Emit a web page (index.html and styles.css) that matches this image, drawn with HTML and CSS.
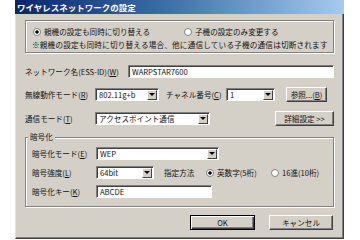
FILE: index.html
```html
<!DOCTYPE html>
<html lang="ja">
<head>
<meta charset="utf-8">
<title>ワイヤレスネットワークの設定</title>
<link rel="stylesheet" href="styles.css">
</head>
<body>
<div class="win">
  <div class="title">ワイヤレスネットワークの設定</div>
  <div class="body">
    <div class="grp top">
      <div class="radios">
        <span class="radio r1"><span class="rb on"></span>親機の設定も同時に切り替える</span>
        <span class="radio"><span class="rb"></span>子機の設定のみ変更する</span>
      </div>
      <div class="note">※親機の設定も同時に切り替える場合、他に通信している子機の通信は切断されます</div>
    </div>

    <div class="row r-net">
      <span class="lbl w-net">ネットワーク名(ESS-ID)(<u>W</u>)</span>
      <span class="field grow">WARPSTAR7600</span>
    </div>

    <div class="row r-mode">
      <span class="lbl w-70">無線動作モード(<u>R</u>)</span>
      <span class="field sel w-mode">802.11g+b<span class="arrow"></span></span>
      <span class="lbl ch">チャネル番号(<u>C</u>)</span>
      <span class="field sel w-ch">1<span class="arrow"></span></span>
      <span class="btn b-ref">参照...(<u>B</u>)</span>
    </div>

    <div class="row r-comm">
      <span class="lbl w-70">通信モード(<u>T</u>)</span>
      <span class="field sel w-comm">アクセスポイント通信<span class="arrow"></span></span>
      <span class="btn b-adv">詳細設定 &gt;&gt;</span>
    </div>

    <div class="grp enc">
      <span class="legend">暗号化</span>
      <div class="row r-in">
        <span class="lbl w-64">暗号化モード(<u>E</u>)</span>
        <span class="field sel w-encm">WEP<span class="arrow"></span></span>
      </div>
      <div class="row r-in">
        <span class="lbl w-64">暗号強度(<u>L</u>)</span>
        <span class="field sel w-str">64bit<span class="arrow"></span></span>
        <span class="lbl how">指定方法</span>
        <span class="radio r2"><span class="rb on"></span>英数字(5桁)</span>
        <span class="radio"><span class="rb"></span>16進(10桁)</span>
      </div>
      <div class="row r-in">
        <span class="lbl w-64">暗号化キー(<u>K</u>)</span>
        <span class="field w-key">ABCDE</span>
      </div>
    </div>

    <div class="actions">
      <span class="btn def b-ok">OK</span>
      <span class="btn b-cancel">キャンセル</span>
    </div>
  </div>
</div>
</body>
</html>
```
FILE: styles.css
```css
* { box-sizing: border-box; margin: 0; padding: 0; }
html, body { width: 360px; height: 240px; overflow: hidden; background: #fff; }
body {
  font-family: "Noto Sans CJK JP", "Noto Sans", sans-serif;
  font-size: 7.6px;
  line-height: 10px;
  color: #111;
}
u { text-decoration: underline; }

.win {
  margin-left: 15px;
  width: 329px;
  height: 239px;
  display: flex;
  flex-direction: column;
}
.title {
  height: 14px;
  flex: none;
  background: linear-gradient(to right, #0a246a 0%, #3a6ea5 45%, #a6caf0 100%);
  color: #fff;
  font-weight: bold;
  font-size: 8.5px;
  line-height: 14px;
  padding-left: 2px;
  white-space: nowrap;
}
.body {
  flex: 1;
  display: flex;
  flex-direction: column;
  background: #d4d0c8;
  border-left: 1px solid #e4e1db;
  border-right: 1px solid #404040;
  border-bottom: 1px solid #404040;
  box-shadow: inset -1px -1px #808080;
  padding: 6px 9px 0 9px;
}

.grp {
  border: 1px solid #808080;
  box-shadow: inset 1px 1px #fff, 1px 1px #fff;
}
.top {
  height: 33px;
  padding: 4px 6px 0 6px;
  flex: none;
}
.radios { display: flex; align-items: center; height: 14px; }
.radio { display: flex; align-items: center; gap: 3px; white-space: nowrap; }
.r1 { width: 152px; padding-left: 1px; }
.note { height: 12px; line-height: 12px; white-space: nowrap; letter-spacing: 0.2px; }

.rb {
  flex: none;
  width: 8px;
  height: 8px;
  border-radius: 50%;
  border: 1px solid #808080;
  background: #fff;
}
.rb.on { background: radial-gradient(circle, #000 0 1.4px, #fff 1.9px); }

.row { display: flex; align-items: center; flex: none; }
.lbl { flex: none; white-space: nowrap; }
.field {
  flex: none;
  height: 13px;
  display: flex;
  align-items: center;
  background: #fff;
  border: 1px solid;
  border-color: #808080 #fff #fff #808080;
  box-shadow: inset 1px 1px #404040;
  padding-left: 3px;
  white-space: nowrap;
  overflow: hidden;
}
.grow { flex: 1; }
.sel { justify-content: space-between; padding-right: 1px; }
.arrow {
  flex: none;
  width: 10px;
  height: 10px;
  display: flex;
  align-items: center;
  justify-content: center;
  background: #d4d0c8;
  border: 1px solid;
  border-color: #fff #404040 #404040 #fff;
}
.arrow::before {
  content: "";
  border-left: 3px solid transparent;
  border-right: 3px solid transparent;
  border-top: 3px solid #000;
}
.btn {
  flex: none;
  height: 15px;
  display: flex;
  align-items: center;
  justify-content: center;
  background: #d4d0c8;
  border: 1px solid;
  border-color: #fff #404040 #404040 #fff;
  box-shadow: inset -1px -1px #808080;
  white-space: nowrap;
}
.btn.def {
  border-color: #000;
  box-shadow: inset 1px 1px #fff, inset -1px -1px #404040, inset -2px -2px #808080;
}

.r-net { margin-top: 12px; height: 13px; }
.w-net { width: 103px; }

.r-mode { margin-top: 9px; height: 15px; }
.w-70 { width: 70px; }
.w-mode { width: 64px; }
.ch { width: 67px; padding-left: 7px; }
.w-ch { width: 49px; }
.b-ref { width: 41px; margin-left: 11px; }

.r-comm { margin-top: 9px; height: 15px; }
.w-comm { width: 115px; }
.b-adv { width: 59px; margin-left: auto; }

.enc {
  position: relative;
  margin-top: 11px;
  padding: 9px 6px 8px 6px;
  display: flex;
  flex-direction: column;
  gap: 6px;
  flex: none;
}
.legend {
  position: absolute;
  top: -6px;
  left: 2px;
  padding: 0 2px;
  background: #d4d0c8;
  line-height: 10px;
}
.r-in { height: 13px; }
.w-64 { width: 64px; }
.w-encm { width: 123px; }
.w-str { width: 58px; }
.how { margin-left: 10px; width: 42px; }
.r2 { width: 65px; }
.w-key { width: 116px; }

.actions {
  margin-top: 8px;
  display: flex;
  justify-content: flex-end;
  gap: 14px;
  padding-right: 1px;
}
.b-ok { width: 65px; }
.b-cancel { width: 64px; }
```
